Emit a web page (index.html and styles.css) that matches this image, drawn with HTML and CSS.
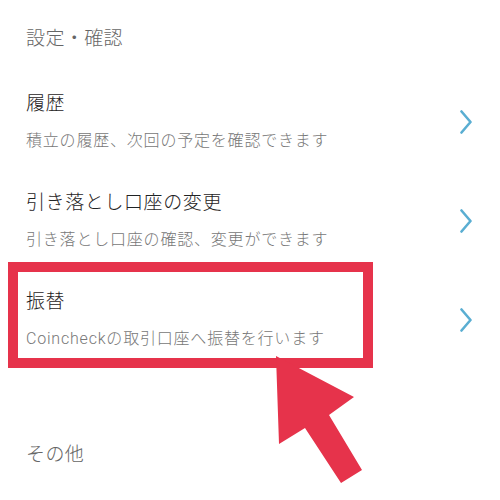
FILE: index.html
```html
<!DOCTYPE html>
<html lang="ja">
<head>
    <meta charset="UTF-8">
    <meta name="viewport" content="width=device-width, initial-scale=1.0">
    <title>設定・確認</title>
    <link rel="stylesheet" href="styles.css">
</head>
<body>
    <div class="page">
        <h2 class="section-title">設定・確認</h2>

        <div class="menu-item">
            <div class="item-text">
                <div class="item-title">履歴</div>
                <div class="item-sub">積立の履歴、次回の予定を確認できます</div>
            </div>
            <svg class="chevron" width="12" height="24" viewBox="0 0 12 24"><path d="M1.5 1.5 L10.5 12 L1.5 22.5" /></svg>
        </div>

        <div class="menu-item">
            <div class="item-text">
                <div class="item-title">引き落とし口座の変更</div>
                <div class="item-sub">引き落とし口座の確認、変更ができます</div>
            </div>
            <svg class="chevron" width="12" height="24" viewBox="0 0 12 24"><path d="M1.5 1.5 L10.5 12 L1.5 22.5" /></svg>
        </div>

        <div class="menu-item">
            <div class="item-text">
                <div class="item-title">振替</div>
                <div class="item-sub">Coincheckの取引口座へ振替を行います</div>
            </div>
            <svg class="chevron" width="12" height="24" viewBox="0 0 12 24"><path d="M1.5 1.5 L10.5 12 L1.5 22.5" /></svg>
            <!-- 注目枠 -->
            <div class="highlight"></div>
        </div>

        <h2 class="section-title other">その他</h2>

        <!-- 矢印 -->
        <svg class="pointer" width="500" height="500" viewBox="0 0 500 500">
            <polygon points="276,356 354,397 329,415 362,470 341,483 305,428 279,444" />
        </svg>
    </div>
</body>
</html>
```

FILE: styles.css
```css
body {
    margin: 0;
    background-color: #fff;
    font-family: Roboto, "Noto Sans CJK JP", sans-serif;
}

.page {
    position: relative;
    width: 500px;
    height: 500px;
    overflow: hidden;
}

.section-title {
    margin: 0;
    padding: 25px 26px 19px;
    font-size: 19px;
    line-height: 28px;
    font-weight: 300;
    letter-spacing: 0.4px;
    color: #666;
}

.section-title.other {
    padding-top: 72px;
}

.menu-item {
    position: relative;
    display: flex;
    align-items: center;
    justify-content: space-between;
    height: 99px;
    padding: 0 28px 0 26px;
    box-sizing: border-box;
}

.item-text {
    display: flex;
    flex-direction: column;
    gap: 11px;
}

.item-title {
    font-size: 19px;
    line-height: 28px;
    font-weight: 300;
    letter-spacing: 0.6px;
    color: #1f2324;
}

.item-sub {
    font-size: 16px;
    line-height: 24px;
    font-weight: 300;
    letter-spacing: 0.8px;
    color: #777;
}

.chevron path {
    fill: none;
    stroke: #5aaed2;
    stroke-width: 2.6;
    stroke-linecap: round;
    stroke-linejoin: round;
}

.highlight {
    position: absolute;
    left: 8px;
    top: -8px;
    width: 365px;
    height: 106px;
    border: 10px solid #e6334b;
    box-sizing: border-box;
}

.pointer {
    position: absolute;
    left: 0;
    top: 0;
}

.pointer polygon {
    fill: #e6334b;
}
```
